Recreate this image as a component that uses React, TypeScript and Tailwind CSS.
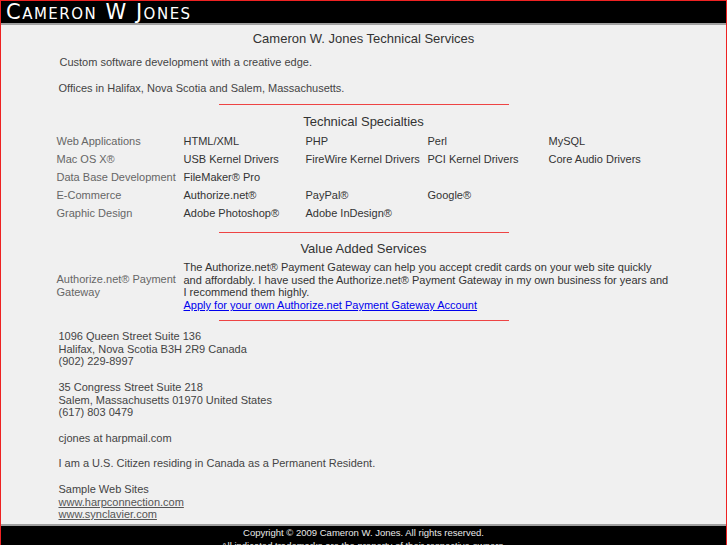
export default function App() {
  const rows: string[][] = [
    ['Web Applications', 'HTML/XML', 'PHP', 'Perl', 'MySQL'],
    ['Mac OS X®', 'USB Kernel Drivers', 'FireWire Kernel Drivers', 'PCI Kernel Drivers', 'Core Audio Drivers'],
    ['Data Base Development', 'FileMaker® Pro', '', '', ''],
    ['E-Commerce', 'Authorize.net®', 'PayPal®', 'Google®', ''],
    ['Graphic Design', 'Adobe Photoshop®', 'Adobe InDesign®', '', ''],
  ]

  return (
    <div className="min-h-[545px] border border-[#ee2222] bg-[#f0f0f0] font-['Liberation_Sans',Arial,sans-serif] text-[11px] text-[#333]">
      {/* header */}
      <div className="h-[24px] bg-black border-b-2 border-[#a0a0a0] pl-[5px] leading-[23px] text-white text-[21px] [font-variant:small-caps] font-['DejaVu_Sans',sans-serif] tracking-[1.5px]">
        Cameron W Jones
      </div>

      <div className="mx-auto w-[614px]">
        <div className="mt-[6px] text-center text-[13px] leading-[16px]">Cameron W. Jones Technical Services</div>
        <p className="mt-[8px] pl-[3px] leading-[14px] text-[#444]">Custom software development with a creative edge.</p>
        <p className="mt-[12px] pl-[2px] leading-[14px] text-[#444]">Offices in Halifax, Nova Scotia and Salem, Massachusetts.</p>
      </div>

      <div className="mx-auto mt-[9px] h-px w-[290px] bg-[#ee4444]" />

      <div className="mx-auto w-[614px]">
        <div className="mt-[9px] text-center text-[13px] leading-[16px]">Technical Specialties</div>
        <div className="mt-[2px] grid grid-cols-[127px_122px_122px_121px_1fr]">
          {rows.map((r, i) =>
            r.map((c, j) => (
              <div key={i + '-' + j} className={`h-[18px] leading-[18px] whitespace-nowrap ${j === 0 ? 'text-[#666]' : 'text-[#333]'}`}>
                {c}
              </div>
            ))
          )}
        </div>
      </div>

      <div className="mx-auto mt-[10px] h-px w-[290px] bg-[#ee4444]" />

      <div className="mx-auto w-[614px]">
        <div className="mt-[8px] text-center text-[13px] leading-[16px]">Value Added Services</div>
        <div className="mt-[4px] flex">
          <div className="w-[127px] shrink-0 self-center leading-[13px] text-[#666]">Authorize.net® Payment Gateway</div>
          <div className="leading-[12.7px]">
            The Authorize.net® Payment Gateway can help you accept credit cards on your web site quickly and affordably. I have used the Authorize.net® Payment Gateway in my own business for years and I recommend them highly.
            <br />
            <a href="#" className="text-[#0000ee] underline">Apply for your own Authorize.net Payment Gateway Account</a>
          </div>
        </div>
      </div>

      <div className="mx-auto mt-[8px] h-px w-[290px] bg-[#ee4444]" />

      <div className="mx-auto w-[614px]">
        <div className="mt-[9px] pl-[2px] leading-[12.75px] text-[#444]">
          1096 Queen Street Suite 136<br />
          Halifax, Nova Scotia B3H 2R9 Canada<br />
          (902) 229-8997<br />
          <br />
          35 Congress Street Suite 218<br />
          Salem, Massachusetts 01970 United States<br />
          (617) 803 0479<br />
          <br />
          cjones at harpmail.com<br />
          <br />
          I am a U.S. Citizen residing in Canada as a Permanent Resident.<br />
          <br />
          Sample Web Sites<br />
          <a href="#" className="text-[#555] underline">www.harpconnection.com</a><br />
          <a href="#" className="text-[#555] underline">www.synclavier.com</a>
        </div>
      </div>

      <div className="mt-[3px] border-t-2 border-[#a0a0a0] bg-black pt-[1px] pb-[4px] text-center text-[9.5px] leading-[12.5px] text-[#e8e8e8]">
        Copyright © 2009 Cameron W. Jones. All rights reserved.<br />
        All indicated trademarks are the property of their respective owners.
      </div>
    </div>
  )
}
